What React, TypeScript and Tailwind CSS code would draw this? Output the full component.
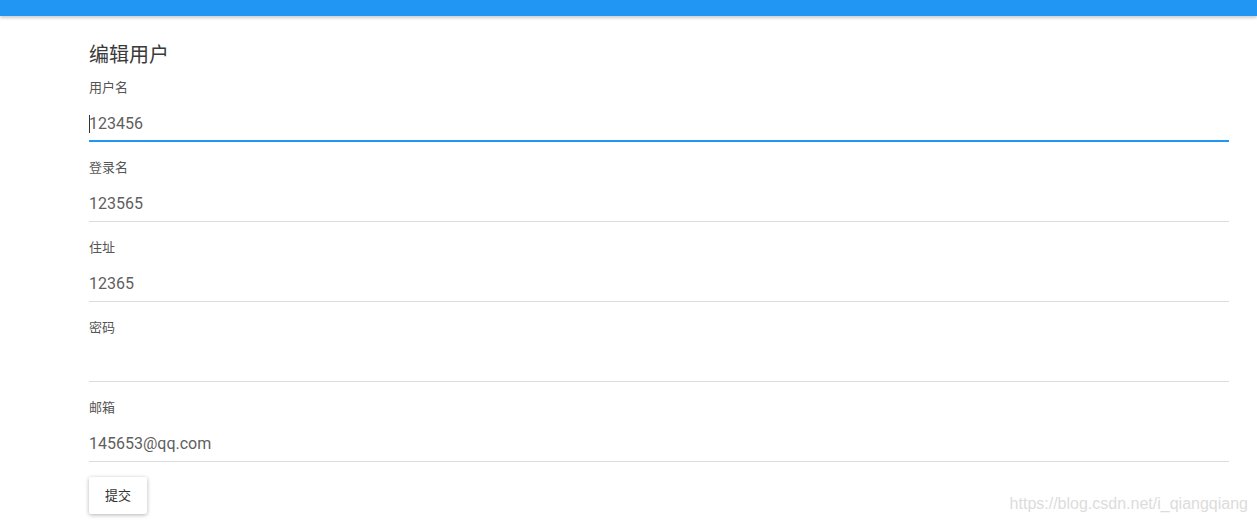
import React from "react";

const fields = [
  { label: "用户名", value: "123456", focused: true },
  { label: "登录名", value: "123565" },
  { label: "住址", value: "12365" },
  { label: "密码", value: "" },
  { label: "邮箱", value: "145653@qq.com" },
];

function Field({ label, value, focused }: { label: string; value: string; focused?: boolean }) {
  return (
    <div className="pb-[18px]">
      <div className="h-4 text-[13px] leading-4 text-[#555]">{label}</div>
      <div
        className={
          "mt-[9px] flex h-[37px] items-center pt-[2px] text-[16px] text-[#5f5f5f] " +
          (focused ? "border-b-2 border-[#2196f3]" : "border-b border-[#dcdcdc]")
        }
      >
        {focused && <span className="mr-[-1px] inline-block h-[18px] w-px bg-[#333]" />}
        {value}
      </div>
    </div>
  );
}

export default function App() {
  return (
    <div
      className="relative h-[523px] w-full overflow-hidden bg-white"
      style={{ fontFamily: "Roboto, 'Noto Sans CJK SC', sans-serif" }}
    >
      <div className="h-4 bg-[#2196f3] shadow-[0_2px_3px_rgba(0,0,0,0.2)]" />
      <div className="pl-[89px] pr-[28px] pt-[25px]">
        <h2 className="h-7 text-[20px] leading-7 text-[#3a3a3a]">编辑用户</h2>
        <div className="mt-[11px]">
          {fields.map((f) => (
            <Field key={f.label} {...f} />
          ))}
        </div>
        <button className="-mt-[3px] h-[37px] w-[58px] rounded-[2px] bg-white text-[13px] text-[#333] shadow-[0_1px_4px_rgba(0,0,0,0.3)]">
          提交
        </button>
      </div>
      <div
        className="absolute bottom-[7px] right-[9px] text-[16px] text-[#dcdcdc]"
        style={{ fontFamily: "'Liberation Sans', Arial, sans-serif" }}
      >
        https://blog.csdn.net/i_qiangqiang
      </div>
    </div>
  );
}
